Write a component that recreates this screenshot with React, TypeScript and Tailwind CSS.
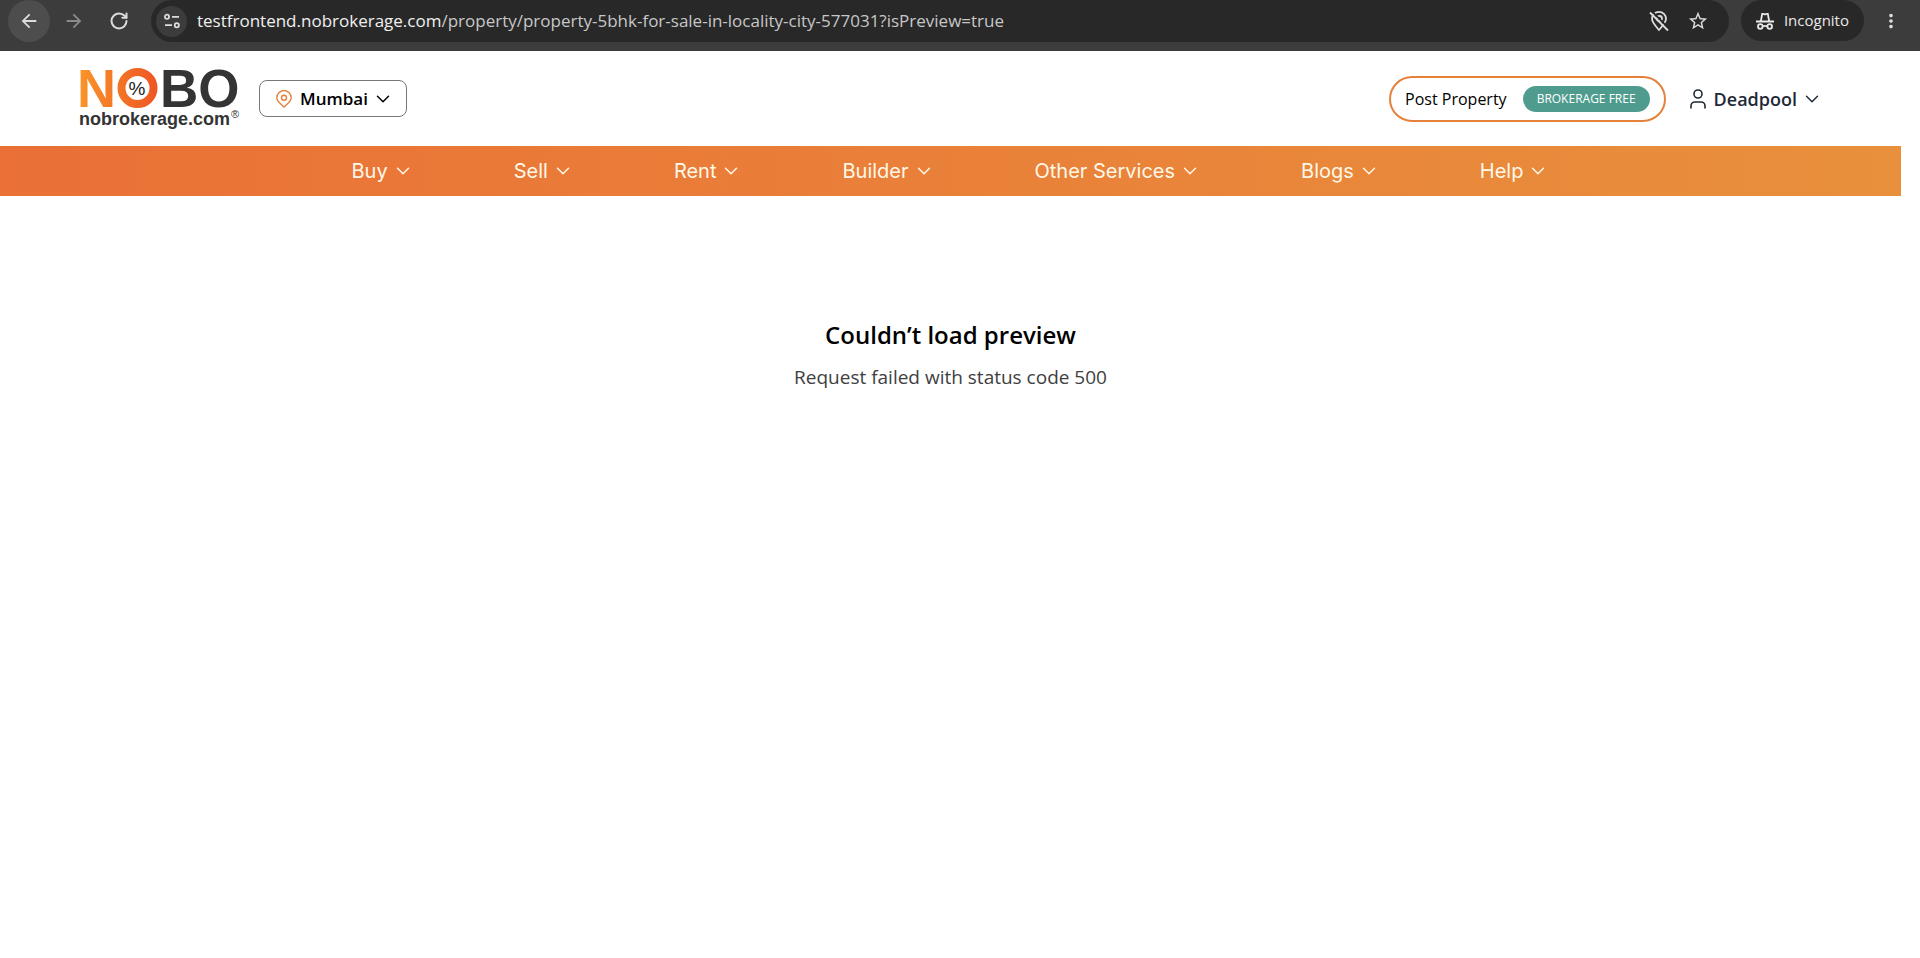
import { ChevronDown, RotateCw, User } from "lucide-react";
import { MdArrowBack, MdArrowForward, MdMoreVert, MdStarBorder } from "react-icons/md";

const NAV_ITEMS = ["Buy", "Sell", "Rent", "Builder", "Other Services", "Blogs", "Help"];

function TuneIcon() {
  return (
    <svg className="h-4 w-4" viewBox="0 0 16 16" fill="none" stroke="currentColor" strokeWidth="1.8">
      <circle cx="3" cy="3.8" r="2.1" />
      <path d="M8 3.8h7M1 12.2h7" />
      <circle cx="12.8" cy="12.2" r="2.1" />
    </svg>
  );
}

function LocationOffIcon() {
  return (
    <svg className="h-[22px] w-5" viewBox="0 0 20 22" fill="none" stroke="currentColor" strokeWidth="1.8">
      <path d="M10 20C6.3 15.8 3 12.4 3 8.8a7 7 0 0 1 14 0C17 12.4 13.7 15.8 10 20Z" />
      <circle cx="10.5" cy="8.5" r="2.5" />
      <path d="M2.5 1 20.5 19" stroke="#282828" />
      <path d="M1 2.5 19 20.5" />
    </svg>
  );
}

function IncognitoIcon() {
  return (
    <svg className="h-[18px] w-[18px]" viewBox="0 0 18 18" fill="none" stroke="currentColor" strokeWidth="1.8">
      <path d="M4.8 9.5 6.2 1.8h1.3l1.5.7 1.5-.7h1.3l1.4 7.7M0 9.5h18" />
      <circle cx="4.3" cy="14.5" r="2.3" />
      <circle cx="13.7" cy="14.5" r="2.3" />
      <path d="M6.6 14.3q2.4-1 4.8 0" />
    </svg>
  );
}

function PinIcon() {
  return (
    <svg className="h-[18px] w-4 text-[#e6813b]" viewBox="0 0 16 18" fill="none" stroke="currentColor" strokeWidth="1.4">
      <path d="M8 17C5.8 14.6.8 12 .8 7.8a7.2 7.2 0 0 1 14.4 0C15.2 12 10.2 14.6 8 17Z" />
      <circle cx="8" cy="7.8" r="2.5" />
    </svg>
  );
}

function BrowserBar() {
  return (
    <div className="flex h-[51px] items-start bg-[#3c3c3c] pl-2 text-[#dcdcdc]">
      <div className="flex gap-[3px]">
        <button aria-label="Back" className="flex h-[42px] w-[42px] items-center justify-center rounded-full bg-[#4d4d4d]">
          <MdArrowBack className="h-[22px] w-[22px]" />
        </button>
        <button aria-label="Forward" className="flex h-[42px] w-[42px] items-center justify-center text-[#8a8a8a]">
          <MdArrowForward className="h-[22px] w-[22px]" />
        </button>
        <button aria-label="Reload" className="flex h-[42px] w-[42px] items-center justify-center">
          <RotateCw className="h-5 w-5" strokeWidth={2.4} />
        </button>
      </div>
      <div className="ml-[11px] flex h-[42px] flex-1 items-center rounded-full bg-[#282828] pl-[5px]">
        <button aria-label="Site information" className="flex h-[31px] w-[31px] items-center justify-center rounded-full bg-[#3c3c3c]">
          <TuneIcon />
        </button>
        <a href="#" className="ml-2.5 flex-1 text-[17px] text-[#c7c7c7]">
          <span className="text-[#f0f0f0]">testfrontend.nobrokerage.com</span>
          /property/property-5bhk-for-sale-in-locality-city-577031?isPreview=true
        </a>
        <button aria-label="Location blocked">
          <LocationOffIcon />
        </button>
        <button aria-label="Bookmark" className="mr-5 ml-[18px]">
          <MdStarBorder className="h-[22px] w-[22px]" />
        </button>
      </div>
      <button className="ml-3 flex h-[41px] items-center gap-2.5 rounded-full bg-[#282828] px-[15px] text-[15px] text-[#e8e8e8]">
        <IncognitoIcon />
        Incognito
      </button>
      <button aria-label="Menu" className="mr-[18px] ml-4 flex h-[41px] items-center">
        <MdMoreVert className="h-[22px] w-[22px]" />
      </button>
    </div>
  );
}

function Logo() {
  return (
    <a href="#" aria-label="nobrokerage.com">
      <svg className="h-[87px] w-[167px]" viewBox="-4 0 167 87" fontFamily="Liberation Sans, sans-serif" fontWeight="700">
        <defs>
          <linearGradient id="logo" x1="0" x2="78" y1="0" y2="0" gradientUnits="userSpaceOnUse">
            <stop stopColor="#f9942a" />
            <stop offset="1" stopColor="#ee5524" />
          </linearGradient>
        </defs>
        <text x="-3" y="52" fontSize="54" fill="url(#logo)">N</text>
        <circle cx="57.5" cy="33" r="16" fill="none" stroke="url(#logo)" strokeWidth="8" />
        <text x="57" y="40" fontSize="19" fontWeight="400" textAnchor="middle" fill="#222">%</text>
        <text x="80" y="52" fontSize="53" fill="#343434">BO</text>
        <text x="-1" y="70" fontSize="18" fill="#343434">nobrokerage.com</text>
        <text x="151" y="63" fontSize="11" fontWeight="400" fill="#343434">®</text>
      </svg>
    </a>
  );
}

function Header() {
  return (
    <header className="flex h-[95px] items-center justify-between pr-[78px] pl-19">
      <div className="flex items-center gap-4">
        <Logo />
        <button className="flex h-[37px] items-center rounded-lg border border-[#777] pr-3 pl-4 text-[17px] font-semibold text-black">
          <PinIcon />
          <span className="mr-1 ml-2">Mumbai</span>
          <ChevronDown className="h-[22px] w-[22px]" strokeWidth={1.6} />
        </button>
      </div>
      <div className="flex items-center gap-5">
        <button className="flex h-[46px] items-center gap-4 rounded-full border-2 border-[#e6813b] px-3.5 text-base text-black">
          Post Property
          <span className="flex h-[26px] items-center rounded-full bg-[#4f9c8e] px-3.5 text-xs text-white">BROKERAGE FREE</span>
        </button>
        <button className="flex items-center gap-1 text-lg font-semibold text-[#1f2937]">
          <User className="h-6 w-6" strokeWidth={1.6} />
          Deadpool
          <ChevronDown className="h-[22px] w-[22px]" strokeWidth={1.6} />
        </button>
      </div>
    </header>
  );
}

export default function App() {
  return (
    <div className="min-h-screen bg-white font-['Open_Sans','Noto_Sans',sans-serif]">
      <BrowserBar />
      <div className="mr-[19px]">
        <Header />
        <nav className="flex h-[50px] items-center justify-center gap-[100px] bg-linear-to-r from-[#ea7036] to-[#e8903c] font-['Inter',sans-serif] text-xl text-[#fff8e8]">
          {NAV_ITEMS.map((item) => (
            <button key={item} className="flex items-center gap-1">
              {item}
              <ChevronDown className="h-[22px] w-[22px]" strokeWidth={1.6} />
            </button>
          ))}
        </nav>
        <main className="pt-[123px] text-center">
          <h1 className="text-2xl font-semibold text-black">Couldn’t load preview</h1>
          <p className="mt-3 text-[19px] text-[#404040]">Request failed with status code 500</p>
        </main>
      </div>
    </div>
  );
}
